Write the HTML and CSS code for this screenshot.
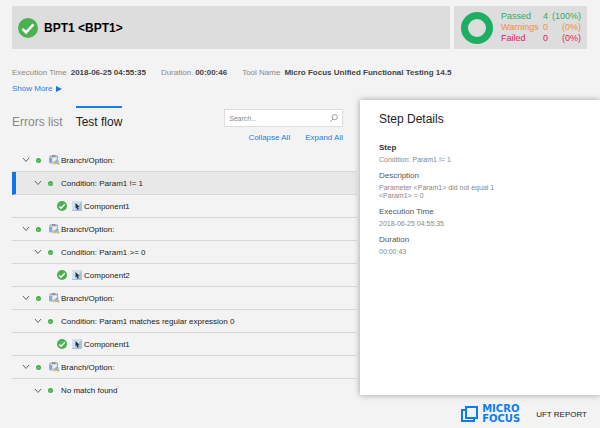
FILE: index.html
```html
<!DOCTYPE html>
<html lang="en">
<head>
    <meta charset="UTF-8">
    <meta name="viewport" content="width=device-width, initial-scale=1.0">
    <title>UFT Report</title>
    <link rel="stylesheet" href="styles.css">
</head>
<body>
    <!-- shared icons -->
    <svg class="sprite" aria-hidden="true">
        <symbol id="check" viewBox="0 0 20 20">
            <circle cx="10" cy="10" r="10" fill="#4bb050"/>
            <path d="M4.5 10.8l3.6 3.6 7.4-8" fill="none" stroke="#fff" stroke-width="2.6"/>
        </symbol>
        <symbol id="check-small" viewBox="0 0 20 20">
            <circle cx="10" cy="10" r="10" fill="#43b049"/>
            <path d="M5 10.5l3.4 3.2 6.4-6.5" fill="none" stroke="#d5f0d6" stroke-width="2"/>
        </symbol>
        <symbol id="chevron" viewBox="0 0 8 6">
            <path d="M1 1l3 3.5L7 1" fill="none" stroke="#666" stroke-width="1"/>
        </symbol>
        <symbol id="branch" viewBox="0 0 11 10">
            <rect x="1" y="1" width="7.5" height="7" fill="#d0d6dd" stroke="#9499a0" stroke-width=".8"/>
            <rect x="3" y="0" width="3.5" height="1.8" fill="#8c9096"/>
            <rect x="0" y="3" width="3" height="4.5" fill="#79ade4"/>
            <rect x="4" y="3" width="4" height="3" fill="#edf2f7"/>
            <path d="M5 7l3-3 2 2-3 3z" fill="#8fb3d2"/>
            <circle cx="5.5" cy="8.4" r="1.2" fill="#dcc56c"/>
            <circle cx="9.2" cy="8.4" r="1.3" fill="#dcb955"/>
        </symbol>
        <symbol id="component" viewBox="0 0 10 10">
            <rect width="10" height="10" fill="#a9c2d9"/>
            <path d="M0 0h10L3 9H0z" fill="#d3e1ee"/>
            <path d="M3.5 2l4 3.8-1.7.2 1 2.1-1.3.6-.9-2.2-1.1 1z" fill="#1d3550"/>
        </symbol>
    </svg>

    <header class="header">
        <div class="title-box">
            <svg class="icon-status"><use href="#check"/></svg>
            <h1>BPT1 &lt;BPT1&gt;</h1>
        </div>
        <div class="summary">
            <svg class="donut" viewBox="0 0 32 32"><circle cx="16" cy="16" r="12.5" fill="none" stroke="#1eae63" stroke-width="7"/></svg>
            <table class="totals">
                <tr class="passed"><th>Passed</th><td>4</td><td class="percent">(100%)</td></tr>
                <tr class="warnings"><th>Warnings</th><td>0</td><td class="percent">(0%)</td></tr>
                <tr class="failed"><th>Failed</th><td>0</td><td class="percent">(0%)</td></tr>
            </table>
        </div>
    </header>

    <section class="info">
        <span>Execution Time <b>2018-06-25 04:55:35</b></span>
        <span>Duration <b>00:00:46</b></span>
        <span>Tool Name <b>Micro Focus Unified Functional Testing 14.5</b></span>
    </section>
    <a href="#" class="show-more">Show More
        <svg class="arrow" viewBox="0 0 6 6"><path d="M0 0l6 3-6 3z" fill="#0b7ae8"/></svg>
    </a>

    <main class="main">
        <section class="flow">
            <div class="toolbar">
                <nav class="tabs">
                    <a href="#" class="tab">Errors list</a>
                    <a href="#" class="tab active">Test flow</a>
                </nav>
                <div class="tools">
                    <label class="search">
                        <input type="text" placeholder="Search..." aria-label="Search">
                        <svg class="icon-search" viewBox="0 0 8 8"><circle cx="4.8" cy="3.2" r="2.6" fill="none" stroke="#888" stroke-width=".8"/><path d="M3 5L.5 7.5" stroke="#888" stroke-width=".9"/></svg>
                    </label>
                    <div class="tree-links">
                        <a href="#">Collapse All</a>
                        <a href="#">Expand All</a>
                    </div>
                </div>
            </div>
            <ul class="tree">
                <li class="row"><svg class="chevron"><use href="#chevron"/></svg><svg class="dot"><use href="#check-small"/></svg><svg class="branch"><use href="#branch"/></svg>Branch/Option:</li>
                <li class="row level2 selected"><svg class="chevron"><use href="#chevron"/></svg><svg class="dot"><use href="#check-small"/></svg>Condition: Param1 != 1</li>
                <li class="row level3"><svg class="status"><use href="#check"/></svg><svg class="component"><use href="#component"/></svg>Component1</li>
                <li class="row"><svg class="chevron"><use href="#chevron"/></svg><svg class="dot"><use href="#check-small"/></svg><svg class="branch"><use href="#branch"/></svg>Branch/Option:</li>
                <li class="row level2"><svg class="chevron"><use href="#chevron"/></svg><svg class="dot"><use href="#check-small"/></svg>Condition: Param1 &gt;= 0</li>
                <li class="row level3"><svg class="status"><use href="#check"/></svg><svg class="component"><use href="#component"/></svg>Component2</li>
                <li class="row"><svg class="chevron"><use href="#chevron"/></svg><svg class="dot"><use href="#check-small"/></svg><svg class="branch"><use href="#branch"/></svg>Branch/Option:</li>
                <li class="row level2"><svg class="chevron"><use href="#chevron"/></svg><svg class="dot"><use href="#check-small"/></svg>Condition: Param1 matches regular expression 0</li>
                <li class="row level3"><svg class="status"><use href="#check"/></svg><svg class="component"><use href="#component"/></svg>Component1</li>
                <li class="row"><svg class="chevron"><use href="#chevron"/></svg><svg class="dot"><use href="#check-small"/></svg><svg class="branch"><use href="#branch"/></svg>Branch/Option:</li>
                <li class="row level2"><svg class="chevron"><use href="#chevron"/></svg><svg class="dot"><use href="#check-small"/></svg>No match found</li>
            </ul>
        </section>

        <section class="details">
            <h2>Step Details</h2>
            <dl>
                <dt class="step">Step</dt>
                <dd>Condition: Param1 != 1</dd>
                <dt>Description</dt>
                <dd>Parameter &lt;Param1&gt; did not equal 1<br>&lt;Param1&gt; = 0</dd>
                <dt>Execution Time</dt>
                <dd>2018-06-25 04:55:35</dd>
                <dt>Duration</dt>
                <dd>00:00:43</dd>
            </dl>
        </section>
    </main>

    <footer class="footer">
        <svg class="logo" viewBox="0 0 17 16">
            <path d="M5 1h11v11H5z" fill="none" stroke="#0b7df0" stroke-width="2"/>
            <path d="M5 4H1v11h12v-3" fill="none" stroke="#0b7df0" stroke-width="2"/>
        </svg>
        <div class="brand">MICRO<br>FOCUS</div>
        <span class="report">UFT REPORT</span>
    </footer>
</body>
</html>
```
FILE: styles.css
```css
* {
    box-sizing: border-box;
}
body {
    font-family: "Liberation Sans", Arial, sans-serif;
    font-size: 8px;
    margin: 0;
    padding-top: 6px;
    background-color: #f3f3f3;
    color: #222;
}
a {
    color: #2a7de8;
    text-decoration: none;
}
svg {
    flex: none;
}
.sprite {
    display: none;
}
.header {
    display: flex;
    gap: 4px;
    height: 43px;
    margin: 0 13px 0 12px;
}
.title-box {
    display: flex;
    flex: 1;
    align-items: center;
    gap: 6px;
    padding-left: 6px;
    background-color: #ddd;
}
.icon-status {
    width: 20px;
    height: 20px;
}
h1 {
    margin: 0;
    font-size: 12px;
    color: #000;
}
.summary {
    display: flex;
    align-items: center;
    gap: 8px;
    width: 133px;
    padding: 0 6px 0 7px;
    background-color: #ddd;
}
.donut {
    width: 32px;
    height: 32px;
}
.totals {
    flex: 1;
    border-collapse: collapse;
    font-size: 9px;
    line-height: 11px;
}
.totals th, .totals td {
    padding: 0;
    font-weight: normal;
    text-align: left;
}
.totals .percent {
    text-align: right;
}
.passed { color: #31ab65; }
.warnings { color: #f08c4c; }
.failed { color: #e5195b; }
.info {
    display: flex;
    gap: 15px;
    margin: 18px 12px 0;
    line-height: 11px;
    color: #888;
    white-space: nowrap;
}
.info span {
    display: flex;
    gap: 4px;
}
.info b {
    color: #444;
}
.show-more {
    display: flex;
    align-items: center;
    gap: 4px;
    margin: 5px 12px 0;
    font-size: 8px;
    line-height: 11px;
}
.arrow {
    width: 6px;
    height: 6px;
}
.main {
    display: flex;
    gap: 3px;
    margin-top: 6px;
}
.flow {
    flex: 1;
    min-width: 0;
    padding: 6px 0 0 12px;
}
.toolbar {
    display: flex;
    justify-content: space-between;
    height: 43px;
    padding-right: 14px;
}
.tabs {
    display: flex;
    align-items: flex-start;
    gap: 13px;
    font-size: 12px;
}
.tab {
    padding-top: 7px;
    border-top: 2px solid transparent;
    line-height: 14px;
    color: #888;
}
.tab.active {
    border-color: #1580eb;
    color: #222;
}
.tools {
    width: 119px;
    padding-top: 3px;
}
.search {
    display: flex;
    align-items: center;
    height: 18px;
    padding: 0 4px;
    border: 1px solid #ddd;
    background-color: #fff;
}
.search input {
    flex: 1;
    min-width: 0;
    padding: 0;
    border: 0;
    outline: 0;
    background: none;
    font: italic 7px "Liberation Sans", Arial, sans-serif;
}
.search input::placeholder {
    color: #888;
}
.icon-search {
    width: 8px;
    height: 8px;
}
.tree-links {
    display: flex;
    justify-content: flex-end;
    gap: 15px;
    padding-top: 5px;
    line-height: 12px;
}
.tree {
    margin: 0 0 -7px;
    padding: 0;
    list-style: none;
}
.row {
    display: flex;
    align-items: center;
    height: 23px;
    padding-left: 10px;
    border-bottom: 1px solid #d8d8d8;
    white-space: nowrap;
}
.row:last-child {
    border-bottom: 0;
}
.level2 {
    padding-left: 22px;
}
.level3 {
    padding-left: 45px;
}
.selected {
    padding-left: 18px;
    border-left: 4px solid #0c78e8;
    background-color: #e8e8e8;
}
.chevron {
    width: 8px;
    height: 6px;
    margin-right: 6px;
}
.dot {
    width: 5px;
    height: 5px;
    margin-right: 8px;
}
.branch {
    width: 11px;
    height: 10px;
    margin-right: 1px;
}
.status {
    width: 10px;
    height: 10px;
    margin-right: 5px;
}
.component {
    width: 10px;
    height: 10px;
    margin-right: 2px;
}
.details {
    flex: 0 0 40%;
    min-width: 0;
    padding: 12px 19px;
    background-color: #fff;
    box-shadow: 0 0 6px rgba(0, 0, 0, 0.35);
}
h2 {
    margin: 0 0 16px;
    font-size: 12px;
    font-weight: normal;
    line-height: 14px;
    color: #222;
}
dl {
    margin: 0;
}
dt {
    padding-bottom: 2px;
    line-height: 12px;
    color: #555;
}
dt.step {
    font-weight: bold;
    color: #333;
}
dd {
    margin: 0 0 6px;
    line-height: 8px;
    font-size: 7px;
    color: #888;
}
.footer {
    display: flex;
    align-items: center;
    justify-content: flex-end;
    padding: 9px 13px 0;
}
.logo {
    width: 17px;
    height: 16px;
}
.brand {
    width: 50px;
    margin: 0 4px;
    font: bold 10px/10px "DejaVu Sans", sans-serif;
    color: #0b7df0;
}
```
